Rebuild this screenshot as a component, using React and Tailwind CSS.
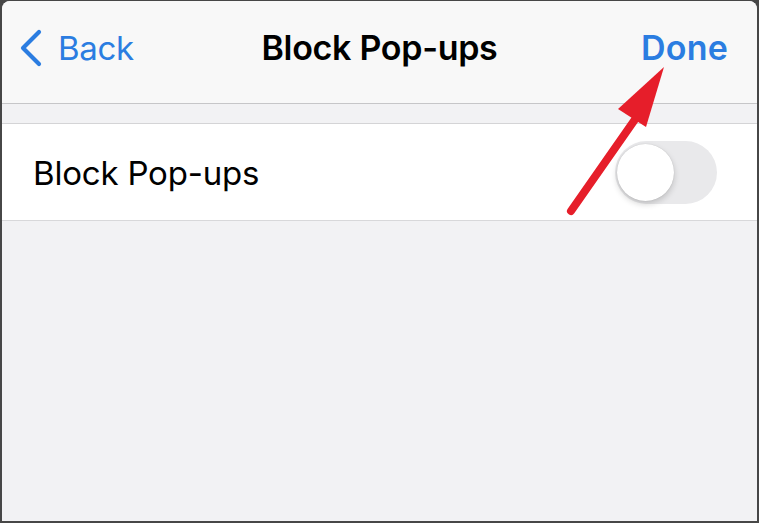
import React from 'react';

const font = { fontFamily: 'Inter, "Noto Sans", sans-serif' };

const Toggle = ({ on }) => (
  <div className={`relative w-[102px] h-[63px] rounded-full ${on ? 'bg-[#34c759]' : 'bg-[#e9e9eb]'}`}>
    <div className="absolute left-[2px] top-[3px] w-[57px] h-[57px] rounded-full bg-white shadow-[0_3px_6px_rgba(0,0,0,0.18),0_0_1px_rgba(0,0,0,0.2)]" />
  </div>
);

export default function App() {
  return (
    <div className="w-[759px] h-[523px] bg-[#474747] pt-px px-[2px] pb-[2px]" style={font}>
      <div className="relative w-full h-full rounded-t-[8px] overflow-hidden bg-[#f2f2f4] flex flex-col">
        {/* nav bar */}
        <div className="h-[103px] bg-[#f8f8f8] border-b border-[#c6c6c8] flex items-center justify-between px-[16px] pb-[8px]">
          <div className="flex items-center gap-[14px] text-[#2b7de1] w-[200px]">
            <svg width="26" height="38" viewBox="0 0 26 38" fill="none">
              <path d="M21 3L5 19l16 16" stroke="currentColor" strokeWidth="4.2" strokeLinecap="round" strokeLinejoin="round" />
            </svg>
            <span className="text-[33px] leading-none tracking-[-0.3px]">Back</span>
          </div>
          <div className="text-[34px] font-semibold text-black leading-none tracking-[-0.3px]">Block Pop-ups</div>
          <div className="w-[200px] flex justify-end pr-[13px]">
            <span className="text-[34px] font-semibold text-[#2b7de1] leading-none tracking-[0.2px]">Done</span>
          </div>
        </div>
        <div className="h-[20px] border-b border-[#d4d4d6]" />
        {/* row */}
        <div className="h-[97px] bg-white border-b border-[#d8d8da] flex items-center justify-between pl-[31px] pr-[40px]">
          <span className="text-[33px] text-black leading-none tracking-[-0.2px] pt-[3px]">Block Pop-ups</span>
          <Toggle on={false} />
        </div>
        <div className="flex-1" />

        {/* annotation arrow */}
        <svg className="absolute left-0 top-0 pointer-events-none" width="755" height="522" viewBox="0 0 755 522">
          <line x1="569" y1="210" x2="634" y2="117" stroke="#e61e2a" strokeWidth="8" strokeLinecap="round" />
          <polygon points="662,66 616,108 644,126" fill="#e61e2a" />
        </svg>
      </div>
    </div>
  );
}
